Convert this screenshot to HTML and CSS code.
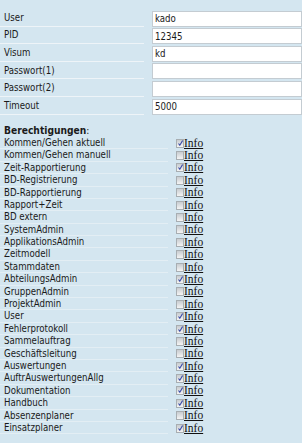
FILE: index.html
```html
<!DOCTYPE html>
<html>
<head>
<meta charset="utf-8">
<link rel="stylesheet" href="styles.css">
</head>
<body>
<div class="page">
  <div class="form">
    <div class="row"><div class="label">User</div><div class="value"><input class="field" value="kado"></div></div>
    <div class="row"><div class="label">PID</div><div class="value"><input class="field" value="12345"></div></div>
    <div class="row"><div class="label">Visum</div><div class="value"><input class="field" value="kd"></div></div>
    <div class="row"><div class="label">Passwort(1)</div><div class="value"><input class="field" value=""></div></div>
    <div class="row"><div class="label">Passwort(2)</div><div class="value"><input class="field" value=""></div></div>
    <div class="row"><div class="label">Timeout</div><div class="value"><input class="field" value="5000"></div></div>
  </div>
  <div class="perms">
    <div class="heading"><b>Berechtigungen</b>:</div>
    <div class="prow"><div class="plabel">Kommen/Gehen aktuell</div><div class="pvalue"><span class="cb on"></span><a class="info">Info</a></div></div>
    <div class="prow"><div class="plabel">Kommen/Gehen manuell</div><div class="pvalue"><span class="cb"></span><a class="info">Info</a></div></div>
    <div class="prow"><div class="plabel">Zeit-Rapportierung</div><div class="pvalue"><span class="cb on"></span><a class="info">Info</a></div></div>
    <div class="prow"><div class="plabel">BD-Registrierung</div><div class="pvalue"><span class="cb"></span><a class="info">Info</a></div></div>
    <div class="prow"><div class="plabel">BD-Rapportierung</div><div class="pvalue"><span class="cb"></span><a class="info">Info</a></div></div>
    <div class="prow"><div class="plabel">Rapport+Zeit</div><div class="pvalue"><span class="cb"></span><a class="info">Info</a></div></div>
    <div class="prow"><div class="plabel">BD extern</div><div class="pvalue"><span class="cb"></span><a class="info">Info</a></div></div>
    <div class="prow"><div class="plabel">SystemAdmin</div><div class="pvalue"><span class="cb"></span><a class="info">Info</a></div></div>
    <div class="prow"><div class="plabel">ApplikationsAdmin</div><div class="pvalue"><span class="cb"></span><a class="info">Info</a></div></div>
    <div class="prow"><div class="plabel">Zeitmodell</div><div class="pvalue"><span class="cb"></span><a class="info">Info</a></div></div>
    <div class="prow"><div class="plabel">Stammdaten</div><div class="pvalue"><span class="cb"></span><a class="info">Info</a></div></div>
    <div class="prow"><div class="plabel">AbteilungsAdmin</div><div class="pvalue"><span class="cb on"></span><a class="info">Info</a></div></div>
    <div class="prow"><div class="plabel">GruppenAdmin</div><div class="pvalue"><span class="cb"></span><a class="info">Info</a></div></div>
    <div class="prow"><div class="plabel">ProjektAdmin</div><div class="pvalue"><span class="cb"></span><a class="info">Info</a></div></div>
    <div class="prow"><div class="plabel">User</div><div class="pvalue"><span class="cb on"></span><a class="info">Info</a></div></div>
    <div class="prow"><div class="plabel">Fehlerprotokoll</div><div class="pvalue"><span class="cb on"></span><a class="info">Info</a></div></div>
    <div class="prow"><div class="plabel">Sammelauftrag</div><div class="pvalue"><span class="cb"></span><a class="info">Info</a></div></div>
    <div class="prow"><div class="plabel">Geschäftsleitung</div><div class="pvalue"><span class="cb"></span><a class="info">Info</a></div></div>
    <div class="prow"><div class="plabel">Auswertungen</div><div class="pvalue"><span class="cb on"></span><a class="info">Info</a></div></div>
    <div class="prow"><div class="plabel">AuftrAuswertungenAllg</div><div class="pvalue"><span class="cb on"></span><a class="info">Info</a></div></div>
    <div class="prow"><div class="plabel">Dokumentation</div><div class="pvalue"><span class="cb on"></span><a class="info">Info</a></div></div>
    <div class="prow"><div class="plabel">Handbuch</div><div class="pvalue"><span class="cb on"></span><a class="info">Info</a></div></div>
    <div class="prow"><div class="plabel">Absenzenplaner</div><div class="pvalue"><span class="cb"></span><a class="info">Info</a></div></div>
    <div class="prow"><div class="plabel">Einsatzplaner</div><div class="pvalue"><span class="cb on"></span><a class="info">Info</a></div></div>
  </div>
</div>
</body>
</html>
```
FILE: styles.css
```css
html, body {
  margin: 0;
  padding: 0;
  background: #d4e6f0;
  overflow: hidden;
}
.page {
  padding-top: 9px;
  font-family: "DejaVu Sans Condensed", "Liberation Sans", sans-serif;
  font-size: 9.6px;
  color: #1a1a1a;
}
.row {
  display: flex;
  height: 17.6px;
}
.label {
  width: 168px;
  padding-left: 4px;
  box-sizing: border-box;
  border-bottom: 1px solid #eef4f8;
  display: flex;
  align-items: center;
}
.value {
  margin-left: 8px;
  display: flex;
  align-items: flex-end;
}
.field {
  width: 150px;
  height: 16px;
  box-sizing: border-box;
  border: 1px solid #c4ccd2;
  background: #fff;
  padding: 0 2px;
  margin: 0;
  font-family: "DejaVu Sans Condensed", "Liberation Sans", sans-serif;
  font-size: 9.6px;
  color: #1a1a1a;
  outline: none;
}
.perms {
  margin-top: 10px;
}
.heading {
  height: 12.4px;
  line-height: 12.4px;
  padding-left: 4px;
  font-size: 10.2px;
}
.prow {
  display: flex;
  height: 12.4px;
  overflow: visible;
}
.plabel {
  width: 168px;
  padding-left: 4px;
  box-sizing: border-box;
  border-bottom: 1px solid #e3eef4;
  line-height: 11px;
  white-space: nowrap;
}
.pvalue {
  margin-left: 8px;
  display: flex;
  align-items: center;
  height: 12.4px;
}
.cb {
  width: 8px;
  height: 9px;
  flex: none;
  box-sizing: border-box;
  border: 1px solid #a8aeb2;
  background: linear-gradient(#c8ccd0, #f4f4f4);
  position: relative;
}
.cb.on::after {
  content: "";
  position: absolute;
  left: 1px;
  top: 0px;
  width: 5px;
  height: 6px;
  background: url("data:image/svg+xml;utf8,<svg xmlns='http://www.w3.org/2000/svg' width='5' height='6' viewBox='0 0 5 6'><path d='M0.5 3.5 L1.8 5.2 L4.6 0.6' fill='none' stroke='%23394aa8' stroke-width='1.1'/></svg>") no-repeat;
}
.info {
  display: block;
  font-family: "Liberation Serif", serif;
  font-size: 11.5px;
  line-height: 10px;
  height: 11px;
  color: #111;
  text-decoration: underline;
}
```
